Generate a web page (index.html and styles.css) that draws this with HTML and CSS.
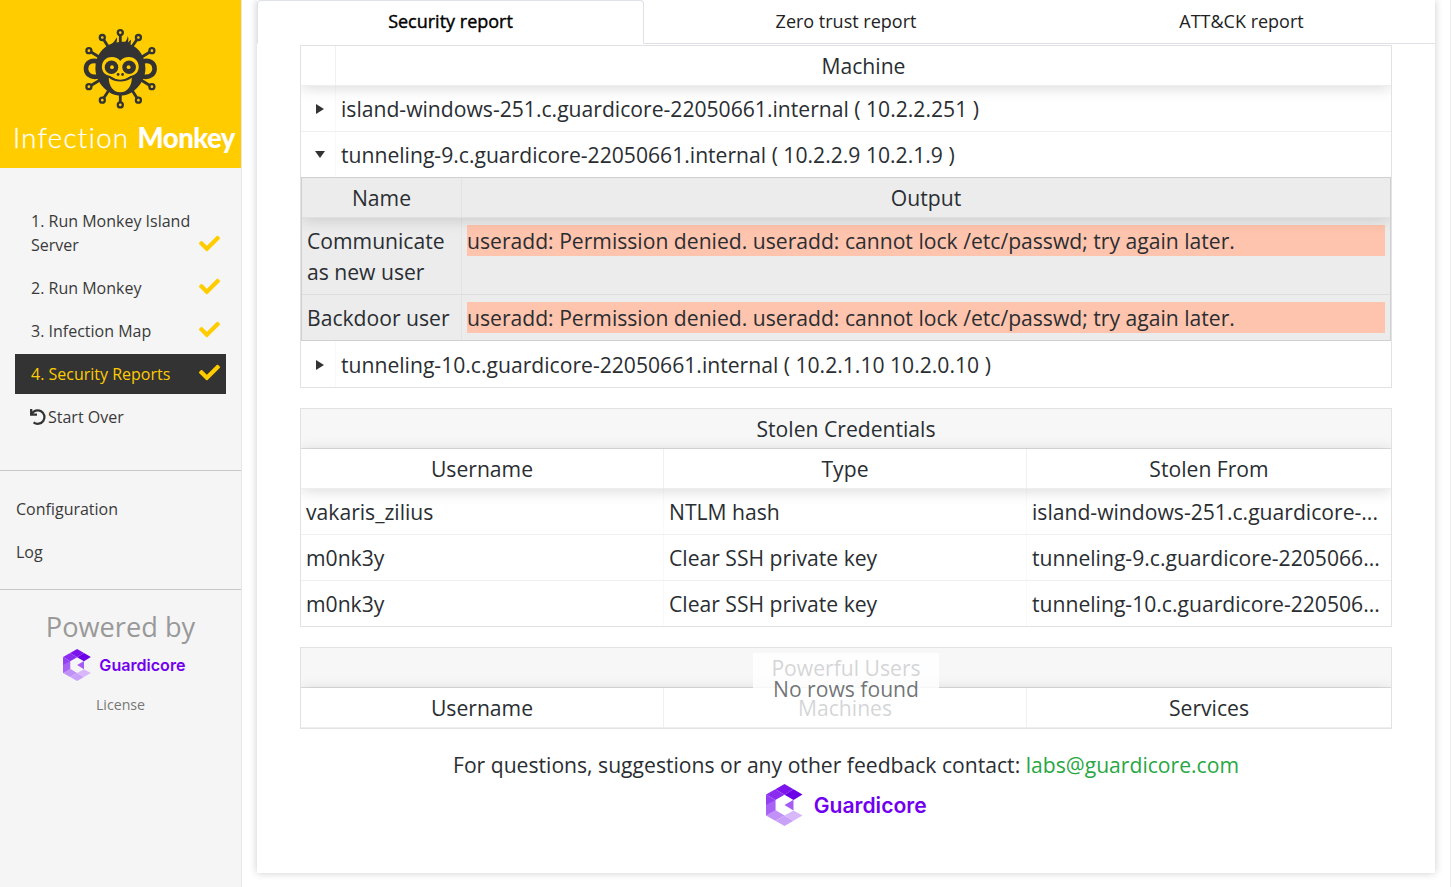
FILE: index.html
```html
<!DOCTYPE html>
<html lang="en">
<head>
<meta charset="utf-8">
<title>Infection Monkey</title>
<link rel="stylesheet" href="styles.css">
</head>
<body>
<svg width="0" height="0" class="defs">
  <symbol id="check" viewBox="0 0 512 512"><path d="M173.898 439.404l-166.4-166.4c-9.997-9.997-9.997-26.206 0-36.204l36.203-36.204c9.997-9.998 26.207-9.998 36.204 0L192 312.69 432.095 72.596c9.997-9.997 26.207-9.997 36.204 0l36.203 36.204c9.997 9.997 9.997 26.206 0 36.204l-294.4 294.401c-9.998 9.997-26.207 9.997-36.204-.001z" fill="#fc0"/></symbol>
  <symbol id="gc" viewBox="0 0 164 42">
    <path d="M18.500 0L27.500 5.300L18.500 10.800L9.300 5.300Z" fill="#7d14ee"/>
    <path d="M27.500 5.300L36.500 10.500L27.500 16L18.500 10.800Z" fill="#6b00e6"/>
    <path d="M9.300 5.300L18.500 10.800L9.300 16L0 10.500Z" fill="#8b2df0"/>
    <path d="M0 10.500L9.300 16V26L0 21Z" fill="#9440f2"/>
    <path d="M0 21L9.300 26V27L0 31.500Z" fill="#ab6cf5"/>
    <path d="M0 21L9.300 16V26.500L0 31.500Z" fill="#a863f5"/>
    <path d="M0 31.500L9.300 26L18.500 31.500L9.300 36.700Z" fill="#c291f8"/>
    <path d="M9.300 36.700L18.500 31.500L27.500 36.700L18.500 42Z" fill="#c9a1f8"/>
    <path d="M18.500 31.500L27.500 26.500L36.500 31.500L27.500 36.700Z" fill="#d8b8fb"/>
    <path d="M18.500 21L27.500 15.800V26.500Z" fill="#a55cf4"/>
    <text x="47.700" y="28.600" class="gc-word" textLength="113" lengthAdjust="spacingAndGlyphs">Guardicore</text>
  </symbol>
</svg>
<div class="app">
  <aside class="sidebar">
    <div class="brand">
      <svg width="241" height="168" viewBox="0 0 241 168">
        <g stroke="#333" stroke-width="2.800">
          <path d="M120.300 34V104M102.300 37.500L111 51M138.400 37.500L129 51M111 87L102.300 100.200M130 87L138.400 100.200M88.900 50.700L100 57.500M151.900 50.700L141 57.500M88.900 86.700L100 80M151.900 86.700L141 80"/>
        </g>
        <g fill="#fc0" stroke="#333" stroke-width="2.300">
          <circle cx="120.300" cy="32.600" r="2.500"/><circle cx="102.300" cy="37.500" r="2.500"/><circle cx="138.400" cy="37.500" r="2.500"/>
          <circle cx="88.900" cy="50.700" r="2.500"/><circle cx="151.900" cy="50.700" r="2.500"/><circle cx="88.900" cy="86.700" r="2.500"/><circle cx="151.900" cy="86.700" r="2.500"/>
          <circle cx="102.300" cy="100.200" r="2.500"/><circle cx="138.400" cy="100.200" r="2.500"/><circle cx="120.300" cy="104.900" r="2.500"/>
        </g>
        <path d="M98 61.500C82 57 82 80 98 76.500M142.600 61.500C158.600 57 158.600 80 142.600 76.500" fill="#fc0" stroke="#333" stroke-width="4.600"/>
        <path d="M112 43.500C114.500 41.500 116 39 116.500 37.500C117.500 39 116.800 41 116.500 42.500C121 41 125 42 125.500 41.500C127 39.500 127.500 38 127.700 36C128.800 38 128.300 40 128 42.500L131 39.500C131 42 130.500 43 130.500 44.500C139 48 145.400 57 145.400 68.500C145.400 76 142 83 137 88C131 94 126 95.500 120.300 95.500C114 95.500 109 93 104 88C99 83 95.400 76 95.400 68.500C95.400 56 102 47 112 43.500Z" fill="#333"/>
        <path d="M120.300 61C117 56 108 55.500 104 60.500C100 66 102 73 107 75C110 76 113 77.300 115 78.700C118.500 80.500 122 80.500 125.600 78.700C128 77.300 131 76 133.600 75C138.800 73 140.600 66 136.600 60.500C132.600 55.500 123.600 56 120.300 61Z" fill="#fc0"/>
        <path d="M108.800 77.300C115.500 82 125 82 131.800 77.300C132 86 127.500 92.300 120.300 92.300S108.600 86 108.800 77.300Z" fill="#fc0"/>
        <path d="M109 76.500C115 82 125.600 82 131.600 76.500" fill="none" stroke="#333" stroke-width="1.700"/>
        <g fill="#333"><circle cx="111.500" cy="67.200" r="6.800"/><circle cx="129.100" cy="67.200" r="6.800"/><circle cx="118.100" cy="74.500" r="1.400"/><circle cx="122.600" cy="74.500" r="1.400"/></g>
        <g fill="#fc0"><circle cx="112" cy="67.200" r="1.900"/><circle cx="128.600" cy="67.200" r="1.900"/></g>
        <text x="13" y="147.500" class="logo-thin" textLength="115">Infection</text>
        <text x="137.500" y="147.500" class="logo-bold" textLength="98">Monkey</text>
      </svg>
    </div>
    <nav class="steps">
      <a class="step tall"><span>1. Run Monkey Island Server</span><svg class="tick"><use href="#check"/></svg></a>
      <a class="step"><span>2. Run Monkey</span><svg class="tick"><use href="#check"/></svg></a>
      <a class="step"><span>3. Infection Map</span><svg class="tick"><use href="#check"/></svg></a>
      <a class="step active"><span>4. Security Reports</span><svg class="tick"><use href="#check"/></svg></a>
      <a class="step restart"><svg width="18" height="18" viewBox="0 0 18 18" fill="none" stroke="#333" stroke-width="2.300"><path d="M2.200 1v5.700h5.800"/><path d="M2.700 6.300A6.700 6.700 0 1 1 4.600 14.300"/></svg><span>Start Over</span></a>
    </nav>
    <nav class="links"><a>Configuration</a><a>Log</a></nav>
    <div class="powered">
      <div class="by">Powered by</div>
      <svg width="125" height="32"><use href="#gc"/></svg>
      <div class="license">License</div>
    </div>
  </aside>
  <main class="main">
    <div class="card">
      <div class="tabs"><div class="tab on">Security report</div><div class="tab">Zero trust report</div><div class="tab">ATT&amp;CK report</div></div>
      <div class="content">
        <div class="table machines">
          <div class="row head"><div></div><div>Machine</div></div>
          <div class="row line"><div><i class="arrow"></i></div><div>island-windows-251.c.guardicore-22050661.internal ( 10.2.2.251 )</div></div>
          <div class="row"><div><i class="arrow open"></i></div><div>tunneling-9.c.guardicore-22050661.internal ( 10.2.2.9 10.2.1.9 )</div></div>
          <div class="sub">
            <div class="row head"><div>Name</div><div>Output</div></div>
            <div class="row line"><div>Communicate as new user</div><div><p class="error">useradd: Permission denied. useradd: cannot lock /etc/passwd; try again later.</p></div></div>
            <div class="row"><div>Backdoor user</div><div><p class="error">useradd: Permission denied. useradd: cannot lock /etc/passwd; try again later.</p></div></div>
          </div>
          <div class="row last"><div><i class="arrow"></i></div><div>tunneling-10.c.guardicore-22050661.internal ( 10.2.1.10 10.2.0.10 )</div></div>
        </div>
        <div class="table thirds">
          <div class="title">Stolen Credentials</div>
          <div class="row head"><div>Username</div><div>Type</div><div>Stolen From</div></div>
          <div class="row line"><div>vakaris_zilius</div><div>NTLM hash</div><div>island-windows-251.c.guardicore-...</div></div>
          <div class="row line"><div>m0nk3y</div><div>Clear SSH private key</div><div>tunneling-9.c.guardicore-2205066...</div></div>
          <div class="row"><div>m0nk3y</div><div>Clear SSH private key</div><div>tunneling-10.c.guardicore-220506...</div></div>
        </div>
        <div class="table thirds">
          <div class="title">Powerful Users</div>
          <div class="row head"><div>Username</div><div>Machines</div><div>Services</div></div>
          <div class="empty">No rows found</div>
        </div>
        <div class="contact">For questions, suggestions or any other feedback contact: <a>labs@guardicore.com</a></div>
        <svg class="footer-logo" width="164" height="42"><use href="#gc"/></svg>
      </div>
    </div>
  </main>
</div>
</body>
</html>
```
FILE: styles.css
```css
* { box-sizing: border-box; }
body { margin: 0; background: #fff; color: #2a2e32; font: 400 16px/24px "Open Sans", "Noto Sans", sans-serif; overflow: hidden; }
.defs { display: block; }
.app { display: flex; height: 887px; }
.sidebar { width: 242px; flex: none; background: #f5f5f5; border-right: 1px solid #e7e7e7; color: #3a3a3a; }
.brand { height: 168px; background: #fc0; }
.brand svg { display: block; }
.logo-thin { font: 300 27.500px Lato, sans-serif; fill: #fff; stroke: #fff; stroke-width: .3px; font-variant-ligatures: none; }
.logo-bold { font: 900 27.500px Lato, sans-serif; fill: #fff; }
.steps { display: flex; flex-direction: column; gap: 3px; padding: 33px 15px 33px; height: 303px; border-bottom: 1px solid #c8c8c8; }
.step { display: flex; justify-content: space-between; align-items: flex-end; height: 40px; padding: 8px 6px 8px 16px; white-space: nowrap; }
.step.tall { height: 64px; }
.step.tall span { width: 162px; white-space: normal; }
.step.active { background: #333; color: #fc0; }
.step.restart { justify-content: flex-start; gap: 1px; padding-left: 14px; }
.step.restart svg { margin-bottom: 3px; }
.tick { width: 21px; height: 21px; margin-bottom: 3px; flex: none; }
.links { display: flex; flex-direction: column; gap: 19px; height: 119px; padding: 26px 16px; border-bottom: 1px solid #c8c8c8; }
.powered { display: flex; flex-direction: column; align-items: center; padding-top: 16px; }
.by { font-size: 27.200px; line-height: 41px; color: #999; height: 43px; }
.powered svg { margin-left: 10px; }
.license { font-size: 14.200px; margin-top: 12px; color: #777; }
.gc-word { font: 600 21.500px Inter, sans-serif; fill: #7200f0; }
.main { flex: 1; padding: 0 15px; border-right: 1px solid #eee; }
.card { width: 1178px; height: 873px; background: #fff; box-shadow: 0 0 8px rgba(0,0,0,.2); }
.tabs { display: grid; grid-template-columns: 387px 404px 387px; height: 44px; font-size: 18px; line-height: 43px; text-align: center; }
.tab { border-bottom: 1px solid #dee2e6; color: #222; }
.tab.on { border: 1px solid #dee2e6; border-bottom-color: #fff; border-radius: 4px 4px 0 0; color: #000; -webkit-text-stroke: .4px #000; line-height: 41px; }
.content { display: flex; flex-direction: column; align-items: stretch; padding: 1px 43px; font-size: 21.130px; line-height: 31px; }
.table { position: relative; width: 1092px; margin-bottom: 20px; border: 1px solid #e2e2e2; overflow: hidden; }
.row { display: grid; }
.machines > .row { grid-template-columns: 35px 1fr; }
.thirds > .row { grid-template-columns: 363px 363px 1fr; }
.row > div { padding: 7px 5px; height: 45px; border-right: 1px solid #f9f9f9; white-space: nowrap; overflow: hidden; text-overflow: ellipsis; }
.row > div:last-child { border-right: 0; }
.line { border-bottom: 1px solid #f0f0f0; }
.row.head { position: relative; background: #fff; border-bottom: 1px solid #eee; box-shadow: 0 2px 15px rgba(0,0,0,.15); }
.row.head > div { height: 39px; padding: 4px 5px; text-align: center; border-right-color: #f0f0f0; }
.arrow { display: block; width: 0; height: 0; margin: 11px 0 0 10px; border-left: 8px solid #333; border-top: 5px solid transparent; border-bottom: 5px solid transparent; }
.arrow.open { margin: 12px 0 0 9px; border: 5px solid transparent; border-top: 7px solid #333; border-bottom: 0; }
.sub { border: 1px solid #d0d0d0; background: #ececec; overflow: hidden; }
.sub > .row { grid-template-columns: 160px 1fr; }
.sub .row.head { background: #ececec; border-bottom-color: #e0e0e0; }
.sub .row > div { border-right-color: #e3e3e3; white-space: normal; height: auto; }
.sub .line { border-bottom-color: #dedede; }
.error { margin: 0; background: #ffc4ad; }
.last > div { height: 46px; padding-top: 8px; }
.title { height: 40px; padding: 4px 5px; background: #f7f7f7; border-bottom: 1px solid #ddd; text-align: center; }
.empty { position: absolute; left: 452px; top: 5px; width: 186px; height: 73px; padding-top: 20px; background: rgba(255,255,255,.8); color: rgba(33,37,41,.65); text-align: center; }
.contact { height: 35px; text-align: center; }
.contact a { color: #28a745; }
.footer-logo { align-self: center; margin-left: 4px; }
```
